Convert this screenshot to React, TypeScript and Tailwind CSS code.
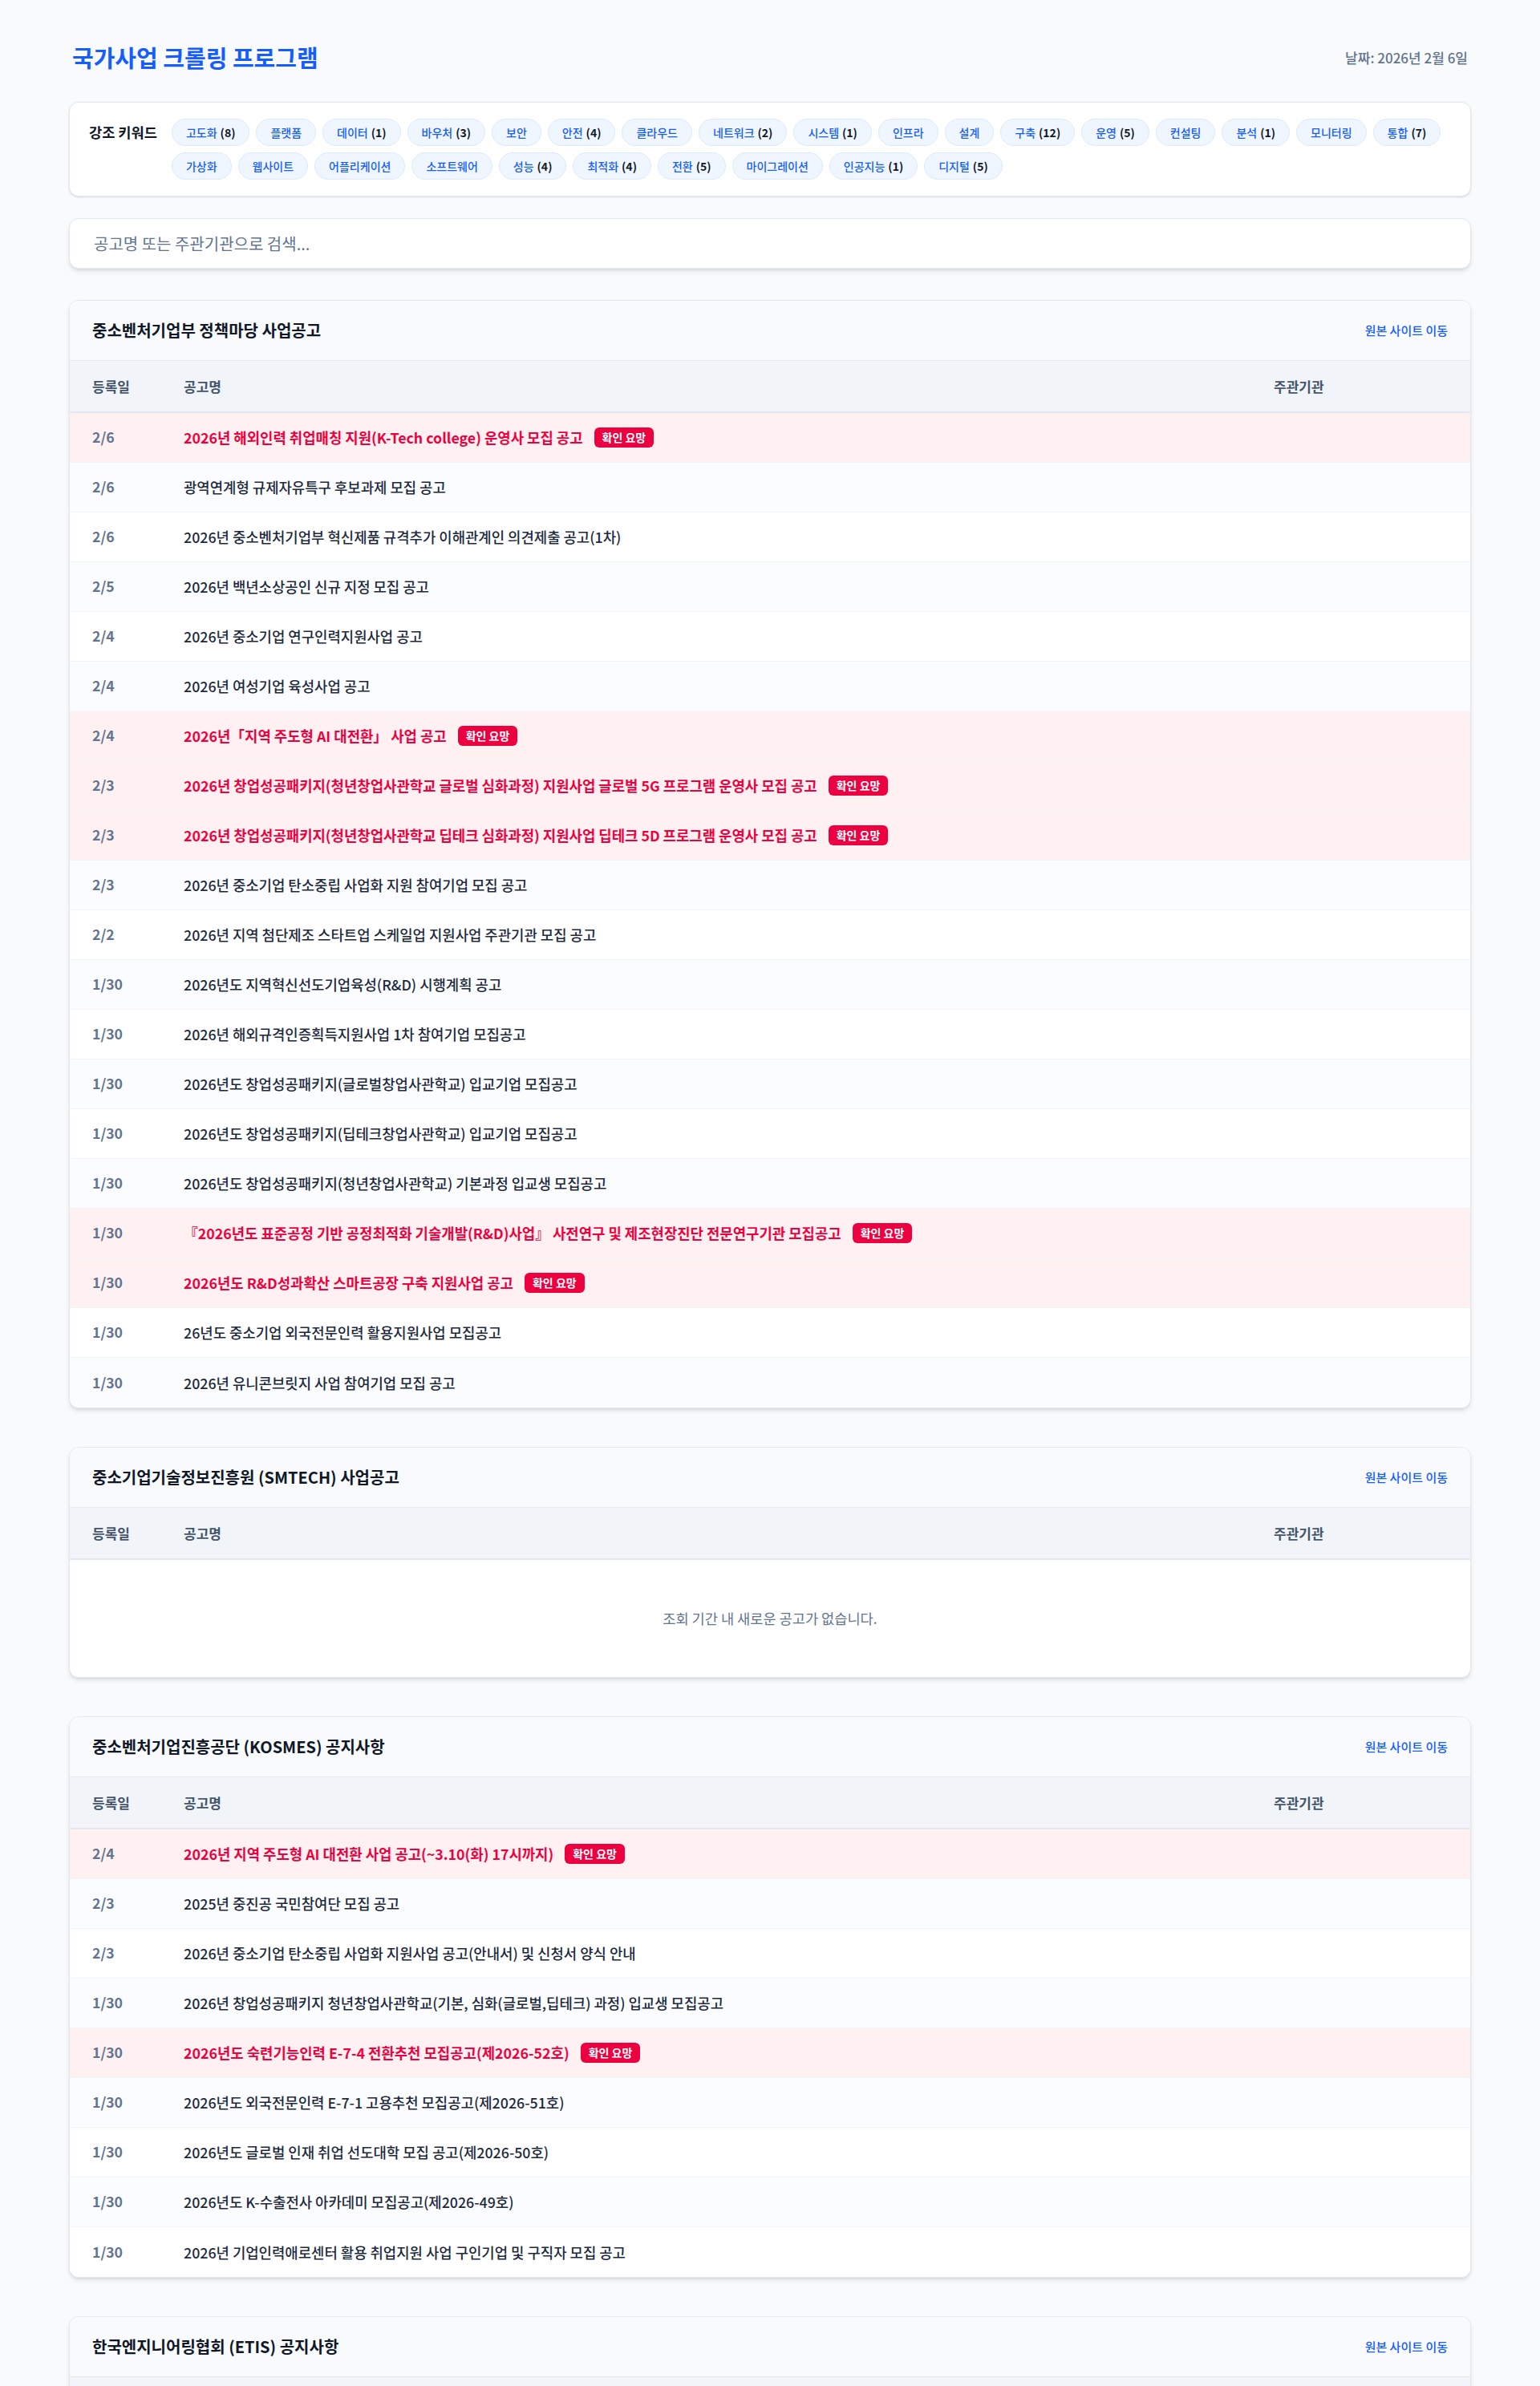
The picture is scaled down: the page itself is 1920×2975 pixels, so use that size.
import React from "react";

type Row = { d: string; t: string; hot?: boolean };

const FONT = { fontFamily: '"Noto Sans CJK KR", "Noto Sans", sans-serif' };

const kw1: [string, number?][] = [
  ["고도화", 8], ["플랫폼"], ["데이터", 1], ["바우처", 3], ["보안"], ["안전", 4], ["클라우드"], ["네트워크", 2], ["시스템", 1], ["인프라"], ["설계"], ["구축", 12], ["운영", 5], ["컨설팅"], ["분석", 1], ["모니터링"], ["통합", 7],
];
const kw2: [string, number?][] = [
  ["가상화"], ["웹사이트"], ["어플리케이션"], ["소프트웨어"], ["성능", 4], ["최적화", 4], ["전환", 5], ["마이그레이션"], ["인공지능", 1], ["디지털", 5],
];

const rows1: Row[] = [
  { d: "2/6", t: "2026년 해외인력 취업매칭 지원(K-Tech college) 운영사 모집 공고", hot: true },
  { d: "2/6", t: "광역연계형 규제자유특구 후보과제 모집 공고" },
  { d: "2/6", t: "2026년 중소벤처기업부 혁신제품 규격추가 이해관계인 의견제출 공고(1차)" },
  { d: "2/5", t: "2026년 백년소상공인 신규 지정 모집 공고" },
  { d: "2/4", t: "2026년 중소기업 연구인력지원사업 공고" },
  { d: "2/4", t: "2026년 여성기업 육성사업 공고" },
  { d: "2/4", t: "2026년「지역 주도형 AI 대전환」 사업 공고", hot: true },
  { d: "2/3", t: "2026년 창업성공패키지(청년창업사관학교 글로벌 심화과정) 지원사업 글로벌 5G 프로그램 운영사 모집 공고", hot: true },
  { d: "2/3", t: "2026년 창업성공패키지(청년창업사관학교 딥테크 심화과정) 지원사업 딥테크 5D 프로그램 운영사 모집 공고", hot: true },
  { d: "2/3", t: "2026년 중소기업 탄소중립 사업화 지원 참여기업 모집 공고" },
  { d: "2/2", t: "2026년 지역 첨단제조 스타트업 스케일업 지원사업 주관기관 모집 공고" },
  { d: "1/30", t: "2026년도 지역혁신선도기업육성(R&D) 시행계획 공고" },
  { d: "1/30", t: "2026년 해외규격인증획득지원사업 1차 참여기업 모집공고" },
  { d: "1/30", t: "2026년도 창업성공패키지(글로벌창업사관학교) 입교기업 모집공고" },
  { d: "1/30", t: "2026년도 창업성공패키지(딥테크창업사관학교) 입교기업 모집공고" },
  { d: "1/30", t: "2026년도 창업성공패키지(청년창업사관학교) 기본과정 입교생 모집공고" },
  { d: "1/30", t: "『2026년도 표준공정 기반 공정최적화 기술개발(R&D)사업』 사전연구 및 제조현장진단 전문연구기관 모집공고", hot: true },
  { d: "1/30", t: "2026년도 R&D성과확산 스마트공장 구축 지원사업 공고", hot: true },
  { d: "1/30", t: "26년도 중소기업 외국전문인력 활용지원사업 모집공고" },
  { d: "1/30", t: "2026년 유니콘브릿지 사업 참여기업 모집 공고" },
];

const rows3: Row[] = [
  { d: "2/4", t: "2026년 지역 주도형 AI 대전환 사업 공고(~3.10(화) 17시까지)", hot: true },
  { d: "2/3", t: "2025년 중진공 국민참여단 모집 공고" },
  { d: "2/3", t: "2026년 중소기업 탄소중립 사업화 지원사업 공고(안내서) 및 신청서 양식 안내" },
  { d: "1/30", t: "2026년 창업성공패키지 청년창업사관학교(기본, 심화(글로벌,딥테크) 과정) 입교생 모집공고" },
  { d: "1/30", t: "2026년도 숙련기능인력 E-7-4 전환추천 모집공고(제2026-52호)", hot: true },
  { d: "1/30", t: "2026년도 외국전문인력 E-7-1 고용추천 모집공고(제2026-51호)" },
  { d: "1/30", t: "2026년도 글로벌 인재 취업 선도대학 모집 공고(제2026-50호)" },
  { d: "1/30", t: "2026년도 K-수출전사 아카데미 모집공고(제2026-49호)" },
  { d: "1/30", t: "2026년 기업인력애로센터 활용 취업지원 사업 구인기업 및 구직자 모집 공고" },
];

const rows4: Row[] = [
  { d: "2/5", t: "2026년 엔지니어링 기술자 교육 안내" },
  { d: "2/3", t: "엔지니어링사업자 실적신고 안내" },
  { d: "1/30", t: "2026년 엔지니어링 산업 동향 조사 안내" },
];

function Chip({ name, count }: { name: string; count?: number }) {
  return (
    <span className="inline-flex items-center rounded-full border border-blue-100 bg-blue-50 px-[17px] py-1.5 text-sm leading-5 font-medium text-blue-600 whitespace-nowrap">
      {name}
      {count !== undefined && <span className="ml-1 font-bold text-gray-900">({count})</span>}
    </span>
  );
}

function TableHead() {
  return (
    <div className="grid grid-cols-[142px_1fr_273px] h-[65px] items-center bg-slate-100 border-b-2 border-slate-200 text-[17px] font-semibold text-slate-600">
      <div className="pl-7">등록일</div>
      <div>공고명</div>
      <div className="pl-7">주관기관</div>
    </div>
  );
}

function RowItem({ r, i }: { r: Row; i: number }) {
  const bg = r.hot ? "bg-rose-50" : i % 2 === 1 ? "bg-slate-50/60" : "bg-white";
  return (
    <div className={`grid grid-cols-[142px_1fr_273px] h-[62px] items-center border-b border-slate-100 last:border-b-0 ${bg}`}>
      <div className="pl-7 text-[17.6px] font-semibold text-slate-500">{r.d}</div>
      <div className="flex items-center gap-3.5 min-w-0">
        <span className={r.hot ? "text-[17.8px] font-bold text-rose-600" : "text-[17.8px] font-medium text-slate-800"}>{r.t}</span>
        {r.hot && (
          <span className="shrink-0 rounded-md bg-rose-600 px-2.5 py-1 text-sm leading-[17px] font-bold text-white">확인 요망</span>
        )}
      </div>
      <div className="pl-7 text-[17.6px] text-slate-600"></div>
    </div>
  );
}

function Section({ title, rows }: { title: string; rows: Row[] }) {
  return (
    <div className="mb-12 overflow-hidden rounded-xl border border-slate-200 bg-white shadow-md">
      <div className="flex h-[75px] items-center justify-between border-b border-slate-200 bg-slate-50 px-7">
        <h2 className="text-[20px] font-bold text-gray-900">{title}</h2>
        <a className="text-[15px] font-medium text-blue-600">원본 사이트 이동</a>
      </div>
      <TableHead />
      {rows.length === 0 ? (
        <div className="py-[62px] text-center text-[17.6px] leading-[22px] text-slate-500">조회 기간 내 새로운 공고가 없습니다.</div>
      ) : (
        rows.map((r, i) => <RowItem key={i} r={r} i={i} />)
      )}
    </div>
  );
}

export default function App() {
  return (
    <div className="min-h-screen bg-slate-50" style={FONT}>
      <div className="mx-auto w-[1748px] pt-[54px] pb-12">
        <header className="mb-[37px] flex h-[36px] items-center justify-between px-1">
          <h1 className="text-[29px] font-bold text-blue-600">국가사업 크롤링 프로그램</h1>
          <div className="text-[17px] font-medium text-slate-500">날짜: 2026년 2월 6일</div>
        </header>

        <div className="mb-[27px] flex gap-[18px] rounded-xl border border-slate-200 bg-white px-6 py-5 shadow-sm">
          <div className="whitespace-nowrap text-[17.6px] font-bold leading-[34px] text-gray-900">강조 키워드</div>
          <div className="flex flex-col gap-2">
            <div className="flex gap-2">
              {kw1.map(([n, c]) => (
                <Chip key={n} name={n} count={c} />
              ))}
            </div>
            <div className="flex gap-2">
              {kw2.map(([n, c]) => (
                <Chip key={n} name={n} count={c} />
              ))}
            </div>
          </div>
        </div>

        <div className="mb-[39px]">
          <input
            className="h-[63px] w-full rounded-xl border border-slate-200 bg-white px-[30px] text-[20px] text-slate-700 shadow-md outline-none placeholder:text-slate-500"
            placeholder="공고명 또는 주관기관으로 검색..."
          />
        </div>

        <Section title="중소벤처기업부 정책마당 사업공고" rows={rows1} />
        <Section title="중소기업기술정보진흥원 (SMTECH) 사업공고" rows={[]} />
        <Section title="중소벤처기업진흥공단 (KOSMES) 공지사항" rows={rows3} />
        <Section title="한국엔지니어링협회 (ETIS) 공지사항" rows={rows4} />
      </div>
    </div>
  );
}
